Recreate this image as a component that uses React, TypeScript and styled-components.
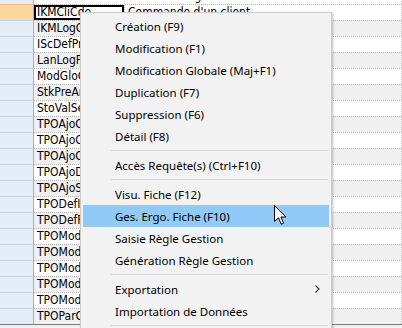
import styled, { createGlobalStyle } from "styled-components";

const GlobalStyle = createGlobalStyle`
    html, body {
        margin: 0;
        padding: 0;
        overflow: hidden;
        background: #f0f0f0;
    }
`

const codes = [
    "IKMCliCde", "IKMLogCde", "IScDefPrm", "LanLogPrm", "ModGloGes",
    "StkPreArt", "StoValSel", "TPOAjoCha", "TPOAjoCol", "TPOAjoCpt",
    "TPOAjoDon", "TPOAjoSai", "TPODefIde", "TPODefFic", "TPOModCha",
    "TPOModCol", "TPOModCpt", "TPOModDon", "TPOModSai", "TPOParCha",
]

type Entry = { label: string; active?: boolean; submenu?: boolean } | "sep";

const entries: Entry[] = [
    { label: "Création (F9)" },
    { label: "Modification (F1)" },
    { label: "Modification Globale (Maj+F1)" },
    { label: "Duplication (F7)" },
    { label: "Suppression (F6)" },
    { label: "Détail (F8)" },
    "sep",
    { label: "Accès Requête(s) (Ctrl+F10)" },
    "sep",
    { label: "Visu. Fiche (F12)" },
    { label: "Ges. Ergo. Fiche (F10)", active: true },
    { label: "Saisie Règle Gestion" },
    { label: "Génération Règle Gestion" },
    "sep",
    { label: "Exportation", submenu: true },
    { label: "Importation de Données" },
    "sep",
    { label: "Impression" },
]

export default function App() {
    return (
        <Screen>
            <GlobalStyle />
            <Grid>
                <Row index={0}>
                    <RowHead />
                    <Cell>IKMHMAff</Cell>
                    <Cell>Date Affichage</Cell>
                </Row>
                {codes.map((code, i) => (
                    <Row key={i} index={i + 1}>
                        <RowHead current={i === 0} />
                        <Cell selected={i === 0}>{code}</Cell>
                        <Cell>{i === 0 ? "Commande d'un client" : ""}</Cell>
                    </Row>
                ))}
            </Grid>

            <Menu>
                {entries.map((e, i) =>
                    e === "sep" ? (
                        <Separator key={i} />
                    ) : (
                        <Item key={i} active={e.active}>
                            {e.label}
                            {e.submenu && (
                                <Chevron width="5" height="8" viewBox="0 0 5 8">
                                    <polyline points="0.5,0.5 4,4 0.5,7.5" fill="none" stroke="#333" strokeWidth="1.1" />
                                </Chevron>
                            )}
                        </Item>
                    )
                )}
            </Menu>

            <Cursor width="13" height="21" viewBox="0 0 13 21">
                <path d="M0.5 0.5 L0.5 16.5 L4.5 12.8 L7.2 19.2 L9.6 18.2 L7 12 L12 12 Z" fill="#fff" stroke="#000" strokeWidth="1" strokeLinejoin="miter" />
            </Cursor>
        </Screen>
    )
}

const Screen = styled.div`
    position: relative;
    width: 402px;
    height: 328px;
    overflow: hidden;
    background: #f0f0f0;
`

const Grid = styled.div`
    display: flex;
    flex-direction: column;
    margin-top: -12px;
    border-bottom: 1px solid #7a7a7a;
    font-family: "Liberation Sans Narrow", "DejaVu Sans Condensed", "Liberation Sans", sans-serif;
    font-size: 12px;
    color: #000;
`

const Row = styled.div<{ index: number }>`
    display: grid;
    grid-template-columns: 34px 91px 1fr;
    height: 16px;
    background: ${({ index }) => index % 2 === 0 && index !== 0 ? "#f0f0f0" : "#ffffff"};
`

const RowHead = styled.div<{ current?: boolean }>`
    box-sizing: border-box;
    background: ${({ current }) => current ? "#fed79f" : "#e4ecf7"};
    border-top: 1px solid ${({ current }) => current ? "#f0c080" : "#c4d4e8"};
    border-right: 1px solid #9db3cf;
`

const Cell = styled.div<{ selected?: boolean }>`
    box-sizing: border-box;
    padding: 0 3px;
    line-height: 15px;
    white-space: nowrap;
    overflow: hidden;
    border-top: 1px dotted #b4b4b4;
    border-right: 1px dotted #c4c4c4;
    box-shadow: ${({ selected }) => selected ? "inset 0 0 0 2px #000" : "none"};
`

const Menu = styled.div`
    position: absolute;
    left: 80px;
    top: 12px;
    width: 252px;
    box-sizing: border-box;
    padding: 2px;
    background: #f2f2f2;
    border: 1px solid #cccccc;
    box-shadow: 1px 1px 2px rgba(0, 0, 0, 0.25);
    font-family: "Noto Sans", "Open Sans", sans-serif;
    font-size: 11.5px;
    color: #000;
`

const Item = styled.div<{ active?: boolean }>`
    display: flex;
    align-items: center;
    height: 22px;
    padding: 0 9px 0 32px;
    background: ${({ active }) => active ? "#91c9f7" : "transparent"};
    white-space: nowrap;
`

const Chevron = styled.svg`
    margin-left: auto;
    display: block;
`

const Separator = styled.div`
    height: 1px;
    margin: 3px 1px 3px 28px;
    background: #d7d7d7;
`

const Cursor = styled.svg`
    position: absolute;
    left: 274px;
    top: 205px;
`
